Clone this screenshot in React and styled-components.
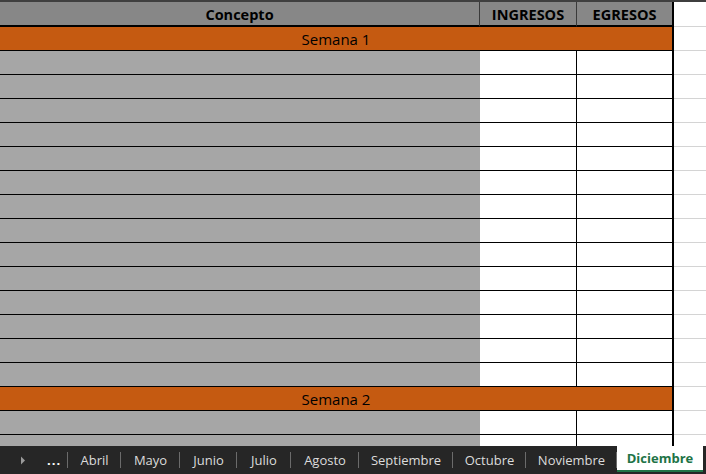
import React from 'react';
import styled, { createGlobalStyle } from 'styled-components';

const GlobalStyle = createGlobalStyle`
  html, body {
    margin: 0;
    padding: 0;
    background: #ffffff;
  }
  body {
    font-family: 'Open Sans', 'Noto Sans', sans-serif;
  }
  * {
    box-sizing: border-box;
  }
`;

const weeks = [
  { title: 'Semana 1', rows: 14 },
  { title: 'Semana 2', rows: 4 },
];

const tabs = [
  { name: 'Abril', width: 53 },
  { name: 'Mayo', width: 59 },
  { name: 'Junio', width: 57 },
  { name: 'Julio', width: 54 },
  { name: 'Agosto', width: 68 },
  { name: 'Septiembre', width: 94 },
  { name: 'Octubre', width: 73 },
  { name: 'Noviembre', width: 91 },
];

const App = () => {
  return (
    <Page>
      <GlobalStyle />
      <Sheet>
        <TopStrip />
        <Row>
          <Table>
            <HeadCell $width='480px' $right>
              Concepto
            </HeadCell>
            <HeadCell $width='97px' $right>
              INGRESOS
            </HeadCell>
            <HeadCell $width='95px'>EGRESOS</HeadCell>
          </Table>
          <Extra />
        </Row>
        {weeks.map((week) => (
          <React.Fragment key={week.title}>
            <Row>
              <Table>
                <WeekCell>{week.title}</WeekCell>
              </Table>
              <Extra />
            </Row>
            {Array.from({ length: week.rows }).map((_, i) => (
              <Row key={i}>
                <Table>
                  <ConceptCell />
                  <AmountCell $right />
                  <AmountCell />
                </Table>
                <Extra />
              </Row>
            ))}
          </React.Fragment>
        ))}
      </Sheet>
      <TabBar>
        <NavArrow>
          <svg width='6' height='9' viewBox='0 0 6 9'>
            <path d='M1 0.5 L5 4.5 L1 8.5 Z' fill='#9a9a9a' />
          </svg>
        </NavArrow>
        <Dots>...</Dots>
        {tabs.map((tab) => (
          <Tab key={tab.name} $width={tab.width}>
            {tab.name}
          </Tab>
        ))}
        <ActiveTab>Diciembre</ActiveTab>
      </TabBar>
    </Page>
  );
};

const Page = styled.div`
  width: 706px;
  height: 474px;
  display: flex;
  flex-direction: column;
  overflow: hidden;
  background: #ffffff;
`;

const Sheet = styled.div`
  flex: 1;
  overflow: hidden;
  display: flex;
  flex-direction: column;
`;

const TopStrip = styled.div`
  height: 2px;
  flex-shrink: 0;
  background: #3f3f3f;
`;

const Row = styled.div`
  display: flex;
  flex-shrink: 0;
`;

const Table = styled.div`
  width: 674px;
  display: flex;
  border-right: 2px solid #000000;
`;

const Extra = styled.div`
  flex: 1;
  border-bottom: 1px solid #d4d4d4;
`;

const HeadCell = styled.div`
  width: ${(p) => p.$width};
  height: 25px;
  background: #878787;
  border-bottom: 2px solid #000000;
  border-right: ${(p) => (p.$right ? '1px solid #3a3a3a' : 'none')};
  display: flex;
  align-items: center;
  justify-content: center;
  padding-top: 1px;
  font-size: 14.5px;
  font-weight: 700;
  color: #000000;
`;

const WeekCell = styled.div`
  flex: 1;
  height: 24px;
  background: #c55a11;
  border-bottom: 1px solid #000000;
  display: flex;
  align-items: center;
  justify-content: center;
  padding-top: 1px;
  font-size: 15px;
  color: #000000;
`;

const ConceptCell = styled.div`
  width: 480px;
  height: 24px;
  background: #a6a6a6;
  border-bottom: 1px solid #000000;
`;

const AmountCell = styled.div`
  width: ${(p) => (p.$right ? '97px' : '95px')};
  height: 24px;
  background: #ffffff;
  border-bottom: 1px solid #000000;
  border-right: ${(p) => (p.$right ? '1px solid #000000' : 'none')};
`;

const TabBar = styled.div`
  height: 28px;
  flex-shrink: 0;
  background: #262626;
  display: flex;
  align-items: stretch;
  font-size: 13px;
  color: #dcdcdc;
`;

const NavArrow = styled.div`
  width: 40px;
  display: flex;
  align-items: center;
  justify-content: center;
  margin-left: 3px;
`;

const Dots = styled.div`
  width: 25px;
  padding-left: 4px;
  display: flex;
  align-items: center;
  font-weight: 700;
  letter-spacing: 1px;
  color: #ffffff;
  position: relative;
  &::after {
    content: '';
    position: absolute;
    right: 0;
    top: 6px;
    height: 16px;
    width: 1px;
    background: #6b6b6b;
  }
`;

const Tab = styled.div`
  width: ${(p) => p.$width}px;
  display: flex;
  align-items: center;
  justify-content: center;
  position: relative;
  white-space: nowrap;
  &::after {
    content: '';
    position: absolute;
    right: 0;
    top: 6px;
    height: 16px;
    width: 1px;
    background: #6b6b6b;
  }
`;

const ActiveTab = styled.div`
  width: 86px;
  display: flex;
  align-items: center;
  justify-content: center;
  white-space: nowrap;
  background: #ffffff;
  color: #217346;
  font-weight: 700;
  height: 26px;
  border-bottom: 2px solid #217346;
`;

export default App;
